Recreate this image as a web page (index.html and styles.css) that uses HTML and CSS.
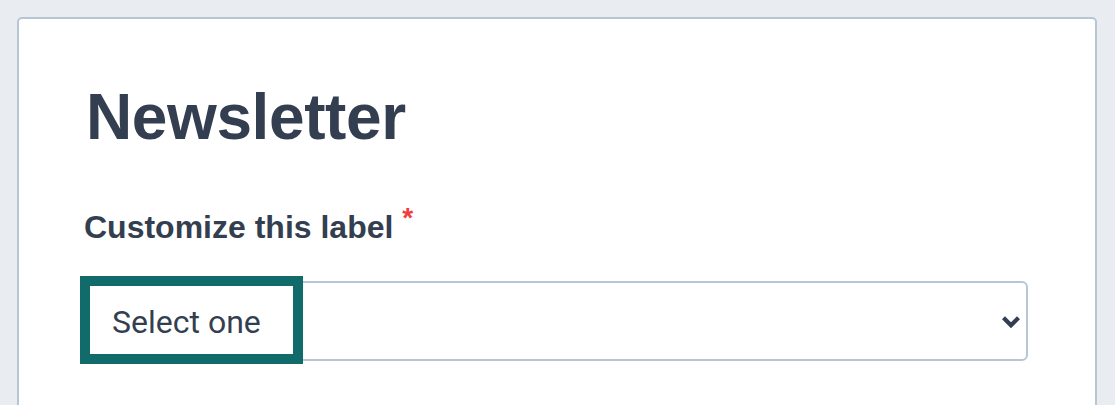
FILE: index.html
```html
<!DOCTYPE html>
<html lang="en">
<head>
<meta charset="utf-8">
<title>Newsletter</title>
<link rel="stylesheet" href="styles.css">
</head>
<body>
<main class="card">
  <h1 class="title">Newsletter</h1>
  <div class="field">
    <label class="label">Customize this label <span class="req">*</span></label>
    <div class="select">
      <span class="focus-box"></span>
      <span class="select-value">Select one</span>
      <svg class="chevron" width="20" height="13" viewBox="0 0 20 13" aria-hidden="true">
        <polyline points="2.5,2.8 10,10.3 17.5,2.8" fill="none" stroke="#333f50" stroke-width="4.2" stroke-linejoin="miter" stroke-linecap="butt"/>
      </svg>
    </div>
  </div>
</main>
</body>
</html>
```
FILE: styles.css
```css
html, body {
  margin: 0;
  padding: 0;
}
body {
  background: #e9edf2;
  height: 405px;
  overflow: hidden;
  padding: 17px 18px 0 17px;
  box-sizing: border-box;
  font-family: "Liberation Sans", Arial, sans-serif;
  color: #333f50;
}
.card {
  background: #ffffff;
  border: 2px solid #b7c5d5;
  border-radius: 5px;
  padding: 66px 67px 60px 62px;
  min-height: 500px;
  box-sizing: border-box;
  display: flex;
  flex-direction: column;
}
.title {
  margin: 0;
  font-size: 64px;
  line-height: 64px;
  font-weight: 700;
  padding-left: 5px;
  letter-spacing: -0.4px;
}
.field {
  display: flex;
  flex-direction: column;
  margin-top: 62px;
}
.label {
  font-size: 32px;
  line-height: 32px;
  font-weight: 700;
  padding-left: 3px;
}
.req {
  color: #f03e3e;
  font-size: 28px;
  line-height: 0;
  vertical-align: 11px;
}
.select {
  position: relative;
  margin-top: 38px;
  height: 80px;
  box-sizing: border-box;
  border: 2px solid #b7c5d5;
  border-radius: 6px;
  display: flex;
  align-items: center;
  justify-content: space-between;
  padding: 1px 5px 0 29px;
}
.select-value {
  font-family: Roboto, "Noto Sans", sans-serif;
  font-size: 32px;
  color: #333f50;
}
.chevron {
  display: block;
}
.focus-box {
  position: absolute;
  left: -3px;
  top: -7px;
  width: 223px;
  height: 88px;
  box-sizing: border-box;
  border: 10px solid #126b6b;
}
```
